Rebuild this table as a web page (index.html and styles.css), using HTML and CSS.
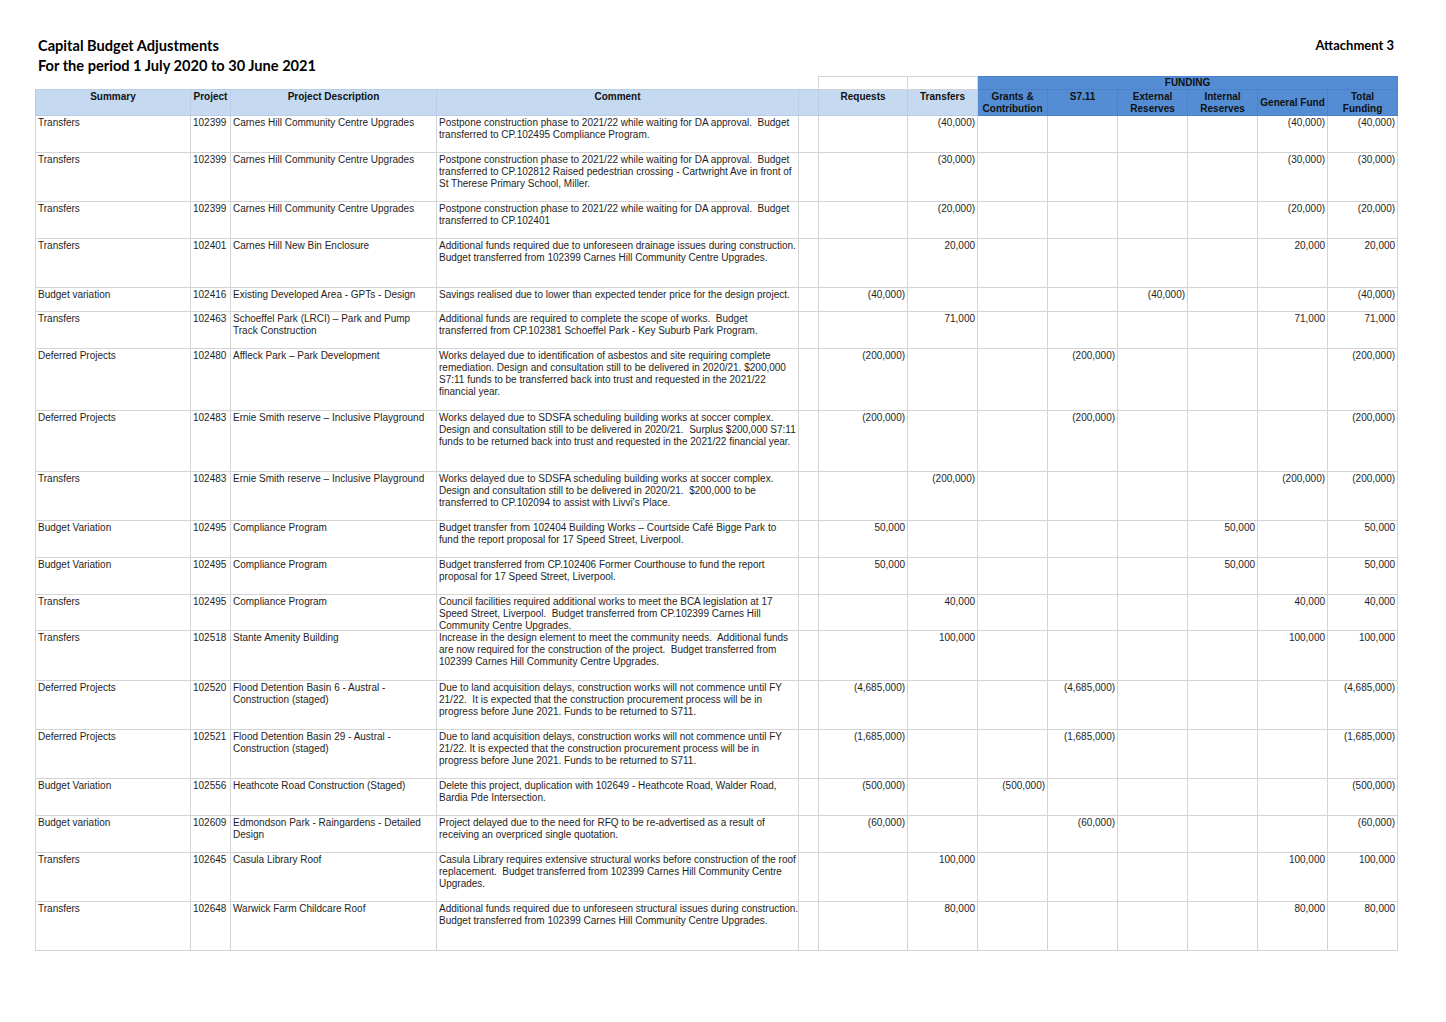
FILE: index.html
```html
<!DOCTYPE html>
<html lang="en">
<head>
<meta charset="utf-8">
<title>Capital Budget Adjustments</title>
<link rel="stylesheet" href="styles.css">
</head>
<body>
<div class="page">
  <div class="head">
    <div class="title">Capital Budget Adjustments<br>For the period 1 July 2020 to 30 June 2021</div>
    <div class="attach">Attachment 3</div>
  </div>
  <table class="grid">
    <colgroup>
      <col class="c-sum"><col class="c-proj"><col class="c-desc"><col class="c-com"><col class="c-gap">
      <col class="c-req"><col class="c-tr">
      <col class="c-f"><col class="c-f"><col class="c-f"><col class="c-f"><col class="c-f"><col class="c-f">
    </colgroup>
    <thead>
      <tr class="hr-a">
        <td class="blank" colspan="5"></td>
        <td class="topcell"></td>
        <td class="topcell"></td>
        <th class="dark fund" colspan="6">FUNDING</th>
      </tr>
      <tr class="hr-b">
        <th class="light">Summary</th>
        <th class="light">Project</th>
        <th class="light">Project Description</th>
        <th class="light">Comment</th>
        <th class="light"></th>
        <th class="light">Requests</th>
        <th class="light">Transfers</th>
        <th class="dark">Grants &amp;<br>Contribution</th>
        <th class="dark">S7.11</th>
        <th class="dark">External<br>Reserves</th>
        <th class="dark">Internal<br>Reserves</th>
        <th class="dark mid">General Fund</th>
        <th class="dark">Total<br>Funding</th>
      </tr>
    </thead>
    <tbody>
      <tr class="h37">
        <td>Transfers</td><td>102399</td><td>Carnes Hill Community Centre Upgrades</td>
        <td>Postpone construction phase to 2021/22 while waiting for DA approval.&nbsp; Budget<br>transferred to CP.102495 Compliance Program.</td>
        <td></td><td class="n"></td><td class="n">(40,000)</td><td class="n"></td><td class="n"></td><td class="n"></td><td class="n"></td><td class="n">(40,000)</td><td class="n">(40,000)</td>
      </tr>
      <tr class="h49">
        <td>Transfers</td><td>102399</td><td>Carnes Hill Community Centre Upgrades</td>
        <td>Postpone construction phase to 2021/22 while waiting for DA approval.&nbsp; Budget<br>transferred to CP.102812 Raised pedestrian crossing - Cartwright Ave in front of<br>St Therese Primary School, Miller.</td>
        <td></td><td class="n"></td><td class="n">(30,000)</td><td class="n"></td><td class="n"></td><td class="n"></td><td class="n"></td><td class="n">(30,000)</td><td class="n">(30,000)</td>
      </tr>
      <tr class="h37">
        <td>Transfers</td><td>102399</td><td>Carnes Hill Community Centre Upgrades</td>
        <td>Postpone construction phase to 2021/22 while waiting for DA approval.&nbsp; Budget<br>transferred to CP.102401</td>
        <td></td><td class="n"></td><td class="n">(20,000)</td><td class="n"></td><td class="n"></td><td class="n"></td><td class="n"></td><td class="n">(20,000)</td><td class="n">(20,000)</td>
      </tr>
      <tr class="h49">
        <td>Transfers</td><td>102401</td><td>Carnes Hill New Bin Enclosure</td>
        <td>Additional funds required due to unforeseen drainage issues during construction.<br>Budget transferred from 102399 Carnes Hill Community Centre Upgrades.</td>
        <td></td><td class="n"></td><td class="n">20,000</td><td class="n"></td><td class="n"></td><td class="n"></td><td class="n"></td><td class="n">20,000</td><td class="n">20,000</td>
      </tr>
      <tr class="h24">
        <td>Budget variation</td><td>102416</td><td>Existing Developed Area - GPTs - Design</td>
        <td>Savings realised due to lower than expected tender price for the design project.</td>
        <td></td><td class="n">(40,000)</td><td class="n"></td><td class="n"></td><td class="n"></td><td class="n">(40,000)</td><td class="n"></td><td class="n"></td><td class="n">(40,000)</td>
      </tr>
      <tr class="h37">
        <td>Transfers</td><td>102463</td><td>Schoeffel Park (LRCI) – Park and Pump<br>Track Construction</td>
        <td>Additional funds are required to complete the scope of works.&nbsp; Budget<br>transferred from CP.102381 Schoeffel Park - Key Suburb Park Program.</td>
        <td></td><td class="n"></td><td class="n">71,000</td><td class="n"></td><td class="n"></td><td class="n"></td><td class="n"></td><td class="n">71,000</td><td class="n">71,000</td>
      </tr>
      <tr class="h62">
        <td>Deferred Projects</td><td>102480</td><td>Affleck Park – Park Development</td>
        <td>Works delayed due to identification of asbestos and site requiring complete<br>remediation. Design and consultation still to be delivered in 2020/21. $200,000<br>S7:11 funds to be transferred back into trust and requested in the 2021/22<br>financial year.</td>
        <td></td><td class="n">(200,000)</td><td class="n"></td><td class="n"></td><td class="n">(200,000)</td><td class="n"></td><td class="n"></td><td class="n"></td><td class="n">(200,000)</td>
      </tr>
      <tr class="h61">
        <td>Deferred Projects</td><td>102483</td><td>Ernie Smith reserve – Inclusive Playground</td>
        <td>Works delayed due to SDSFA scheduling building works at soccer complex.<br>Design and consultation still to be delivered in 2020/21.&nbsp; Surplus $200,000 S7:11<br>funds to be returned back into trust and requested in the 2021/22 financial year.</td>
        <td></td><td class="n">(200,000)</td><td class="n"></td><td class="n"></td><td class="n">(200,000)</td><td class="n"></td><td class="n"></td><td class="n"></td><td class="n">(200,000)</td>
      </tr>
      <tr class="h49">
        <td>Transfers</td><td>102483</td><td>Ernie Smith reserve – Inclusive Playground</td>
        <td>Works delayed due to SDSFA scheduling building works at soccer complex.<br>Design and consultation still to be delivered in 2020/21.&nbsp; $200,000 to be<br>transferred to CP.102094 to assist with Livvi's Place.</td>
        <td></td><td class="n"></td><td class="n">(200,000)</td><td class="n"></td><td class="n"></td><td class="n"></td><td class="n"></td><td class="n">(200,000)</td><td class="n">(200,000)</td>
      </tr>
      <tr class="h37">
        <td>Budget Variation</td><td>102495</td><td>Compliance Program</td>
        <td>Budget transfer from 102404 Building Works – Courtside Café Bigge Park to<br>fund the report proposal for 17 Speed Street, Liverpool.</td>
        <td></td><td class="n">50,000</td><td class="n"></td><td class="n"></td><td class="n"></td><td class="n"></td><td class="n">50,000</td><td class="n"></td><td class="n">50,000</td>
      </tr>
      <tr class="h37">
        <td>Budget Variation</td><td>102495</td><td>Compliance Program</td>
        <td>Budget transferred from CP.102406 Former Courthouse to fund the report<br>proposal for 17 Speed Street, Liverpool.</td>
        <td></td><td class="n">50,000</td><td class="n"></td><td class="n"></td><td class="n"></td><td class="n"></td><td class="n">50,000</td><td class="n"></td><td class="n">50,000</td>
      </tr>
      <tr class="h36">
        <td>Transfers</td><td>102495</td><td>Compliance Program</td>
        <td class="ov"><div class="clip">Council facilities required additional works to meet the BCA legislation at 17<br>Speed Street, Liverpool.&nbsp; Budget transferred from CP.102399 Carnes Hill<br>Community Centre Upgrades.</div></td>
        <td></td><td class="n"></td><td class="n">40,000</td><td class="n"></td><td class="n"></td><td class="n"></td><td class="n"></td><td class="n">40,000</td><td class="n">40,000</td>
      </tr>
      <tr class="h50">
        <td>Transfers</td><td>102518</td><td>Stante Amenity Building</td>
        <td>Increase in the design element to meet the community needs.&nbsp; Additional funds<br>are now required for the construction of the project.&nbsp; Budget transferred from<br>102399 Carnes Hill Community Centre Upgrades.</td>
        <td></td><td class="n"></td><td class="n">100,000</td><td class="n"></td><td class="n"></td><td class="n"></td><td class="n"></td><td class="n">100,000</td><td class="n">100,000</td>
      </tr>
      <tr class="h49">
        <td>Deferred Projects</td><td>102520</td><td>Flood Detention Basin 6 - Austral -<br>Construction (staged)</td>
        <td>Due to land acquisition delays, construction works will not commence until FY<br>21/22.&nbsp; It is expected that the construction procurement process will be in<br>progress before June 2021. Funds to be returned to S711.</td>
        <td></td><td class="n">(4,685,000)</td><td class="n"></td><td class="n"></td><td class="n">(4,685,000)</td><td class="n"></td><td class="n"></td><td class="n"></td><td class="n">(4,685,000)</td>
      </tr>
      <tr class="h49">
        <td>Deferred Projects</td><td>102521</td><td>Flood Detention Basin 29 - Austral -<br>Construction (staged)</td>
        <td>Due to land acquisition delays, construction works will not commence until FY<br>21/22. It is expected that the construction procurement process will be in<br>progress before June 2021. Funds to be returned to S711.</td>
        <td></td><td class="n">(1,685,000)</td><td class="n"></td><td class="n"></td><td class="n">(1,685,000)</td><td class="n"></td><td class="n"></td><td class="n"></td><td class="n">(1,685,000)</td>
      </tr>
      <tr class="h37">
        <td>Budget Variation</td><td>102556</td><td>Heathcote Road Construction (Staged)</td>
        <td>Delete this project, duplication with 102649 - Heathcote Road, Walder Road,<br>Bardia Pde Intersection.</td>
        <td></td><td class="n">(500,000)</td><td class="n"></td><td class="n">(500,000)</td><td class="n"></td><td class="n"></td><td class="n"></td><td class="n"></td><td class="n">(500,000)</td>
      </tr>
      <tr class="h37">
        <td>Budget variation</td><td>102609</td><td>Edmondson Park - Raingardens - Detailed<br>Design</td>
        <td>Project delayed due to the need for RFQ to be re-advertised as a result of<br>receiving an overpriced single quotation.</td>
        <td></td><td class="n">(60,000)</td><td class="n"></td><td class="n"></td><td class="n">(60,000)</td><td class="n"></td><td class="n"></td><td class="n"></td><td class="n">(60,000)</td>
      </tr>
      <tr class="h49">
        <td>Transfers</td><td>102645</td><td>Casula Library Roof</td>
        <td>Casula Library requires extensive structural works before construction of the roof<br>replacement.&nbsp; Budget transferred from 102399 Carnes Hill Community Centre<br>Upgrades.</td>
        <td></td><td class="n"></td><td class="n">100,000</td><td class="n"></td><td class="n"></td><td class="n"></td><td class="n"></td><td class="n">100,000</td><td class="n">100,000</td>
      </tr>
      <tr class="h49">
        <td>Transfers</td><td>102648</td><td>Warwick Farm Childcare Roof</td>
        <td>Additional funds required due to unforeseen structural issues during construction.<br>Budget transferred from 102399 Carnes Hill Community Centre Upgrades.</td>
        <td></td><td class="n"></td><td class="n">80,000</td><td class="n"></td><td class="n"></td><td class="n"></td><td class="n"></td><td class="n">80,000</td><td class="n">80,000</td>
      </tr>
    </tbody>
  </table>
</div>
</body>
</html>
```
FILE: styles.css
```css
html, body {
  margin: 0;
  padding: 0;
  background: #ffffff;
}

body {
  font-family: "Liberation Sans", Arial, sans-serif;
  color: #1e1e1e;
}

.page {
  padding: 36px 0 0 35px;
  width: 1362px;
}

.head {
  display: flex;
  justify-content: space-between;
  align-items: flex-start;
  height: 40px;
}

.title {
  font-family: Lato, "Open Sans", sans-serif;
  font-weight: 700;
  font-size: 14.6px;
  line-height: 20px;
  padding-left: 3px;
  color: #000000;
}

.attach {
  font-family: Lato, "Open Sans", sans-serif;
  font-weight: 700;
  font-size: 13px;
  line-height: 18px;
  padding-right: 3px;
  color: #000000;
}

.grid {
  border-collapse: collapse;
  table-layout: fixed;
  width: 1362px;
  font-size: 10px;
  line-height: 12px;
}

.c-sum { width: 155px; }
.c-proj { width: 40px; }
.c-desc { width: 206px; }
.c-com { width: 362px; }
.c-gap { width: 20px; }
.c-req { width: 89px; }
.c-tr { width: 70px; }
.c-f { width: 70px; }

.grid td,
.grid th {
  border: 1px solid #d4d4d4;
  padding: 0 2px 0 2px;
  vertical-align: top;
  white-space: nowrap;
  overflow: hidden;
  text-align: left;
}

.grid th {
  font-weight: 700;
  text-align: center;
  color: #111111;
}

.hr-a td, .hr-a th { height: 12px; padding: 0 2px; line-height: 12px; }
.grid .blank { border: none; }
.grid .topcell { background: #ffffff; }

.hr-b th { height: 23px; padding-top: 1px; padding-bottom: 0; line-height: 12px; box-sizing: border-box; }
.hr-b th.mid { vertical-align: middle; }

.grid .light { background: #c5d9f1; border-color: #b9cde6; }
.grid .dark { background: #548dd4; border-color: #4a83ca; }

.grid td.n { text-align: right; }

.grid tbody td { padding-top: 1px; box-sizing: border-box; }
.grid tbody td.ov { overflow: visible; }
.h24 td { height: 24px; }
.h36 td { height: 36px; }
.h37 td { height: 37px; }
.h49 td { height: 49px; }
.h50 td { height: 50px; }
.h61 td { height: 61px; }
.h62 td { height: 62px; }

.clip {
  height: 34px;
  overflow: visible;
}
```
